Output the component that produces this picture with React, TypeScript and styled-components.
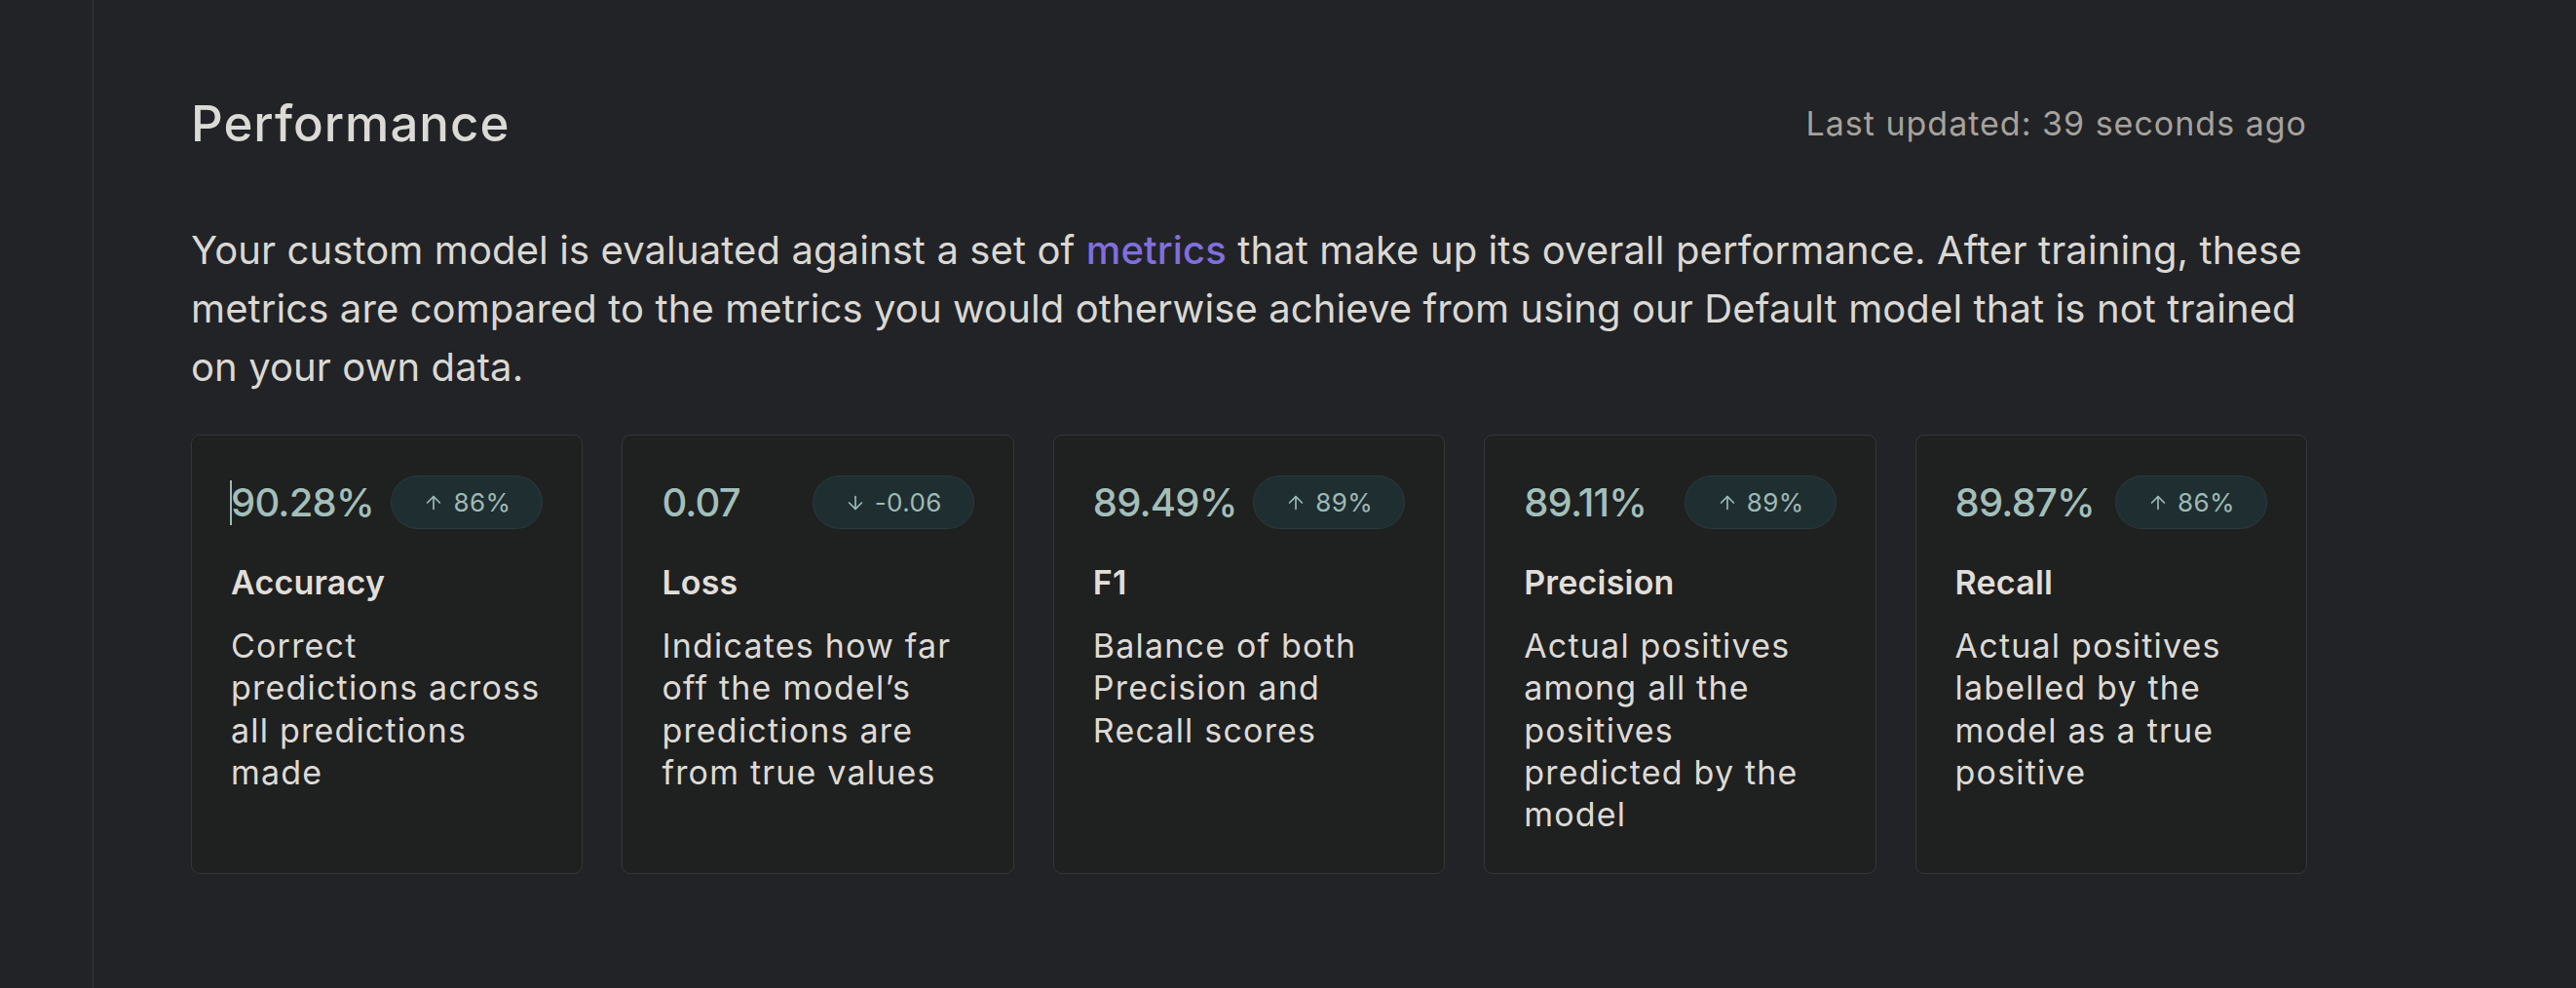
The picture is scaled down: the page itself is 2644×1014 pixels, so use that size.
import React from "react";
import styled, { createGlobalStyle } from "styled-components";
import { ArrowUp, ArrowDown } from "lucide-react";

const GlobalStyle = createGlobalStyle`
  html, body {
    margin: 0;
    padding: 0;
    background: #222326;
  }
  body {
    font-family: Inter, "Noto Sans", sans-serif;
    -webkit-font-smoothing: antialiased;
  }
  * { box-sizing: border-box; }
`;

const Shell = styled.div`
  display: flex;
  min-height: 100vh;
  background: #222326;
`;

const Sidebar = styled.aside`
  width: 96px;
  flex: none;
  border-right: 1px solid #36383b;
`;

const Main = styled.main`
  flex: 1;
  padding: 97px 0 0 100px;
`;

const Content = styled.div`
  width: 2172px;
`;

const Header = styled.header`
  display: flex;
  align-items: center;
  justify-content: space-between;
`;

const Heading = styled.h1`
  margin: 0;
  font-size: 51px;
  line-height: 60px;
  font-weight: 500;
  letter-spacing: 1px;
  color: #dcdad6;
`;

const Updated = styled.span`
  font-size: 34px;
  line-height: 40px;
  font-weight: 400;
  color: #a6a29d;
  letter-spacing: 1px;
`;

const Intro = styled.p`
  margin: 70px 0 0;
  font-size: 40px;
  line-height: 60px;
  font-weight: 400;
  color: #dad8d3;
  letter-spacing: 0.1px;
`;

const Link = styled.a`
  color: #7f6fdd;
  font-weight: 500;
  text-decoration: none;
`;

const Grid = styled.div`
  display: grid;
  grid-template-columns: repeat(5, 1fr);
  gap: 40px;
  margin-top: 39px;
`;

const Card = styled.section`
  display: flex;
  flex-direction: column;
  background: #1f2020;
  border: 1px solid #343638;
  border-radius: 9px;
  padding: 41px 40px 37px 40px;
  min-height: 451px;
`;

const TopRow = styled.div`
  display: flex;
  align-items: center;
  justify-content: space-between;
`;

const Value = styled.span<{ $focused?: boolean }>`
  position: relative;
  font-size: 40px;
  line-height: 48px;
  font-weight: 500;
  color: #a2bfba;
  letter-spacing: -0.8px;
  &::before {
    content: "";
    display: ${(p) => (p.$focused ? "block" : "none")};
    position: absolute;
    left: -1px;
    top: 1px;
    width: 1.5px;
    height: 46px;
    background: #9fbab5;
  }
`;

const Badge = styled.span`
  display: inline-flex;
  align-items: center;
  gap: 9px;
  height: 55px;
  padding: 0 32px;
  border-radius: 999px;
  background: #1f2e31;
  border: 1px solid #2a3b3d;
  color: #9fbab5;
  font-size: 26px;
  line-height: 1;
  letter-spacing: 0.4px;
`;

const Title = styled.h3`
  margin: 33px 0 0;
  font-size: 34px;
  line-height: 44px;
  font-weight: 600;
  color: #e1ded9;
  letter-spacing: 0.2px;
`;

const Desc = styled.p`
  margin: 21px 0 0;
  font-size: 34px;
  line-height: 43.3px;
  font-weight: 400;
  color: #dddad5;
  letter-spacing: 1.2px;
`;

type Metric = {
  value: string;
  delta: string;
  up: boolean;
  title: string;
  desc: string;
  focused?: boolean;
};

const metrics: Metric[] = [
  {
    value: "90.28%",
    delta: "86%",
    up: true,
    title: "Accuracy",
    desc: "Correct predictions across all predictions made",
    focused: true,
  },
  {
    value: "0.07",
    delta: "-0.06",
    up: false,
    title: "Loss",
    desc: "Indicates how far off the model\u2019s predictions are from true values",
  },
  {
    value: "89.49%",
    delta: "89%",
    up: true,
    title: "F1",
    desc: "Balance of both Precision and Recall scores",
  },
  {
    value: "89.11%",
    delta: "89%",
    up: true,
    title: "Precision",
    desc: "Actual positives among all the positives predicted by the model",
  },
  {
    value: "89.87%",
    delta: "86%",
    up: true,
    title: "Recall",
    desc: "Actual positives labelled by the model as a true positive",
  },
];

export default function App() {
  return (
    <>
      <GlobalStyle />
      <Shell>
        <Sidebar />
        <Main>
          <Content>
            <Header>
              <Heading>Performance</Heading>
              <Updated>Last updated: 39 seconds ago</Updated>
            </Header>
            <Intro>
              Your custom model is evaluated against a set of{" "}
              <Link href="#">metrics</Link> that make up its overall
              performance. After training, these metrics are compared to the
              metrics you would otherwise achieve from using our Default model
              that is not trained on your own data.
            </Intro>
            <Grid>
              {metrics.map((m) => (
                <Card key={m.title}>
                  <TopRow>
                    <Value $focused={m.focused}>{m.value}</Value>
                    <Badge>
                      {m.up ? (
                        <ArrowUp size={22} strokeWidth={1.8} />
                      ) : (
                        <ArrowDown size={22} strokeWidth={1.8} />
                      )}
                      {m.delta}
                    </Badge>
                  </TopRow>
                  <Title>{m.title}</Title>
                  <Desc>{m.desc}</Desc>
                </Card>
              ))}
            </Grid>
          </Content>
        </Main>
      </Shell>
    </>
  );
}
